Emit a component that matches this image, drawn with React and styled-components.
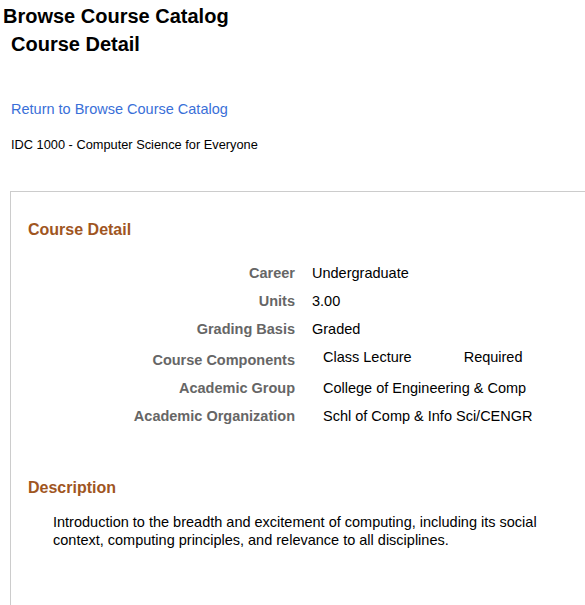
import React from 'react';
import styled, { createGlobalStyle } from 'styled-components';

const GlobalStyle = createGlobalStyle`
  body {
    margin: 0;
    background: #fff;
    font-family: "Liberation Sans", Arial, sans-serif;
    color: #000;
  }
`;

const rows = [
  { label: 'Career', values: ['Undergraduate'] },
  { label: 'Units', values: ['3.00'] },
  { label: 'Grading Basis', values: ['Graded'] },
  { label: 'Course Components', values: ['Class Lecture', 'Required'], shifted: true, tall: true },
  { label: 'Academic Group', values: ['College of Engineering & Comp'], shifted: true },
  { label: 'Academic Organization', values: ['Schl of Comp & Info Sci/CENGR'], shifted: true },
];

export default function App() {
  return (
    <Page>
      <GlobalStyle />
      <Header>
        <PageTitle>Browse Course Catalog</PageTitle>
        <SubTitle>Course Detail</SubTitle>
      </Header>
      <BackLink href="#">Return to Browse Course Catalog</BackLink>
      <CourseName>IDC 1000 - Computer Science for Everyone</CourseName>
      <Panel>
        <SectionTitle>Course Detail</SectionTitle>
        <DetailList>
          {rows.map((row) => (
            <DetailRow key={row.label}>
              <Label $tall={row.tall}>{row.label}</Label>
              <Values $shifted={row.shifted}>
                {row.values.map((v) => (
                  <Value key={v}>{v}</Value>
                ))}
              </Values>
            </DetailRow>
          ))}
        </DetailList>
        <SectionTitle $gap>Description</SectionTitle>
        <Description>
          Introduction to the breadth and excitement of computing, including its social
          context, computing principles, and relevance to all disciplines.
        </Description>
      </Panel>
    </Page>
  );
}

const Page = styled.div`
  width: 585px;
  height: 605px;
  overflow: hidden;
`;

const Header = styled.div`
  padding: 4px 0 0 3px;
`;

const PageTitle = styled.h1`
  margin: 0;
  font-size: 20px;
  line-height: 24px;
  font-weight: bold;
`;

const SubTitle = styled.h2`
  margin: 4px 0 0 8px;
  font-size: 20px;
  line-height: 24px;
  font-weight: bold;
`;

const BackLink = styled.a`
  display: block;
  margin: 44px 0 0 11px;
  font-size: 14.5px;
  line-height: 18px;
  color: #3a6fd8;
  text-decoration: none;
`;

const CourseName = styled.div`
  margin: 19px 0 0 11px;
  font-size: 12.8px;
  line-height: 16px;
`;

const Panel = styled.div`
  margin: 38px -20px 0 10px;
  border: 1px solid #cccccc;
  padding: 28px 0 100px 17px;
`;

const SectionTitle = styled.h3`
  margin: ${(p) => (p.$gap ? '53px' : '0')} 0 0 0;
  font-size: 16px;
  line-height: 20px;
  font-weight: bold;
  color: #a0561f;
`;

const DetailList = styled.div`
  margin-top: 24px;
  display: flex;
  flex-direction: column;
  gap: 10px;
`;

const DetailRow = styled.div`
  display: grid;
  grid-template-columns: 267px 1fr;
  align-items: start;
  font-size: 14.5px;
  line-height: 18px;
`;

const Label = styled.div`
  text-align: right;
  font-weight: bold;
  color: #666666;
  padding-top: ${(p) => (p.$tall ? '3px' : '0')};
`;

const Values = styled.div`
  display: flex;
  gap: 52px;
  padding-left: ${(p) => (p.$shifted ? '28px' : '17px')};
`;

const Value = styled.span``;

const Description = styled.p`
  margin: 15px 0 0 25px;
  width: 500px;
  font-size: 14.5px;
  line-height: 18px;
`;
